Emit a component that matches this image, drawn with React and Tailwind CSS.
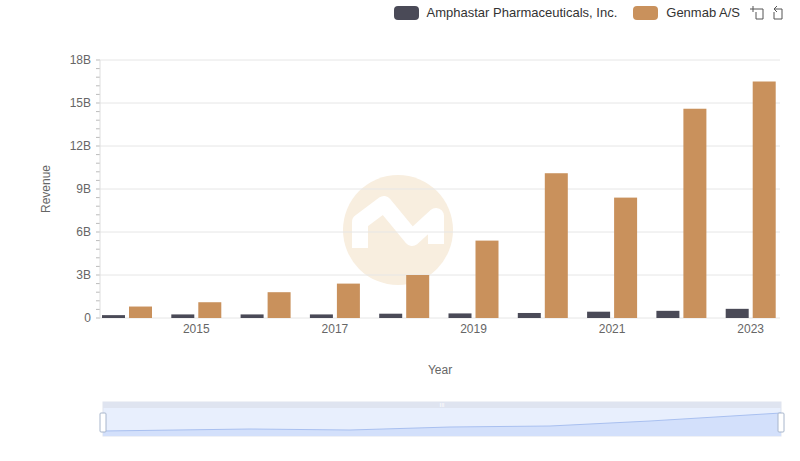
const amph = [0.2, 0.25, 0.25, 0.25, 0.3, 0.32, 0.35, 0.44, 0.5, 0.64];
const gen = [0.8, 1.1, 1.8, 2.4, 3.0, 5.4, 10.1, 8.4, 14.6, 16.5];
const y0 = 318;
const k = 258 / 18;
const gw = 69.3;

export default function App() {
  return (
    <div className="w-[800px] h-[461px] bg-white relative" style={{ fontFamily: '"Liberation Sans", Arial, sans-serif' }}>
      <div className="flex items-center justify-end gap-2 pt-[4px] pr-[16px] h-[22px] text-[13px] text-[#333]">
        <span className="w-[25px] h-[14px] rounded-[4px] bg-[#4a4a57]" />
        <span>Amphastar Pharmaceuticals, Inc.</span>
        <span className="w-[25px] h-[14px] rounded-[4px] bg-[#c9915c] ml-2" />
        <span>Genmab A/S</span>
        <svg width="36" height="18" viewBox="0 0 36 18" fill="none" stroke="#555" strokeWidth="1">
          <path d="M2 5h6M5 2v6M8 5h7v10H8V8" />
          <path d="M26 5h8v10h-8V8M26 5l3-3M26 5l3 3" />
        </svg>
      </div>
      <svg width="800" height="439" className="absolute left-0 top-0 pointer-events-none" style={{ top: 0 }}>
        <g transform="translate(398,230)">
          <circle r="55" fill="#f8eedf" />
          <path d="M-38 18 L-38 -8 L-14 -26 L14 8 L38 -14 L38 14" fill="none" stroke="#fff" strokeWidth="16" strokeLinejoin="round" />
        </g>
        {[0, 3, 6, 9, 12, 15, 18].map((v) => (
          <g key={v}>
            <line x1="100" x2="780" y1={y0 - v * k} y2={y0 - v * k} stroke="#e6e6e6" />
            <text x="91" y={y0 - v * k + 4} textAnchor="end" fontSize="12" fill="#666">{v === 0 ? '0' : v + 'B'}</text>
          </g>
        ))}
        {Array.from({ length: 31 }, (_, i) => (
          <line key={i} x1="96" x2="100" y1={y0 - i * 0.6 * k} y2={y0 - i * 0.6 * k} stroke="#bbb" />
        ))}
        <line x1="100" x2="100" y1="60" y2="318" stroke="#ddd" />
        {gen.map((g, i) => {
          const x = 100 + i * gw;
          return (
            <g key={i}>
              <rect x={x + 2} y={y0 - amph[i] * k} width="23" height={amph[i] * k} fill="#4a4a57" />
              <rect x={x + 29} y={y0 - g * k} width="23" height={g * k} fill="#c9915c" />
            </g>
          );
        })}
        {[2015, 2017, 2019, 2021, 2023].map((yr, j) => (
          <text key={yr} x={100 + (1 + 2 * j) * gw + 27} y="333" textAnchor="middle" fontSize="12" fill="#666">{yr}</text>
        ))}
        <text x="50" y="189" transform="rotate(-90 50 189)" textAnchor="middle" fontSize="12" fill="#666">Revenue</text>
        <text x="440" y="374" textAnchor="middle" fontSize="12" fill="#666">Year</text>
        <rect x="103" y="402" width="678" height="34" fill="#e8effd" stroke="#dfe4ee" />
        <rect x="103" y="402" width="678" height="6" fill="#dfe4f0" />
        <text x="442" y="407" textAnchor="middle" fontSize="6" fill="#fff">III</text>
        <path d="M103 431 L250 429 L350 430 L450 427 L550 426 L650 421 L781 413 L781 436 L103 436Z" fill="#d3e0fb" stroke="none" />
        <path d="M103 431 L250 429 L350 430 L450 427 L550 426 L650 421 L781 413" fill="none" stroke="#a9c0f0" />
        <rect x="100" y="413" width="6" height="19" rx="1" fill="#fff" stroke="#a8b6cc" />
        <rect x="778" y="413" width="6" height="19" rx="1" fill="#fff" stroke="#a8b6cc" />
      </svg>
    </div>
  );
}
